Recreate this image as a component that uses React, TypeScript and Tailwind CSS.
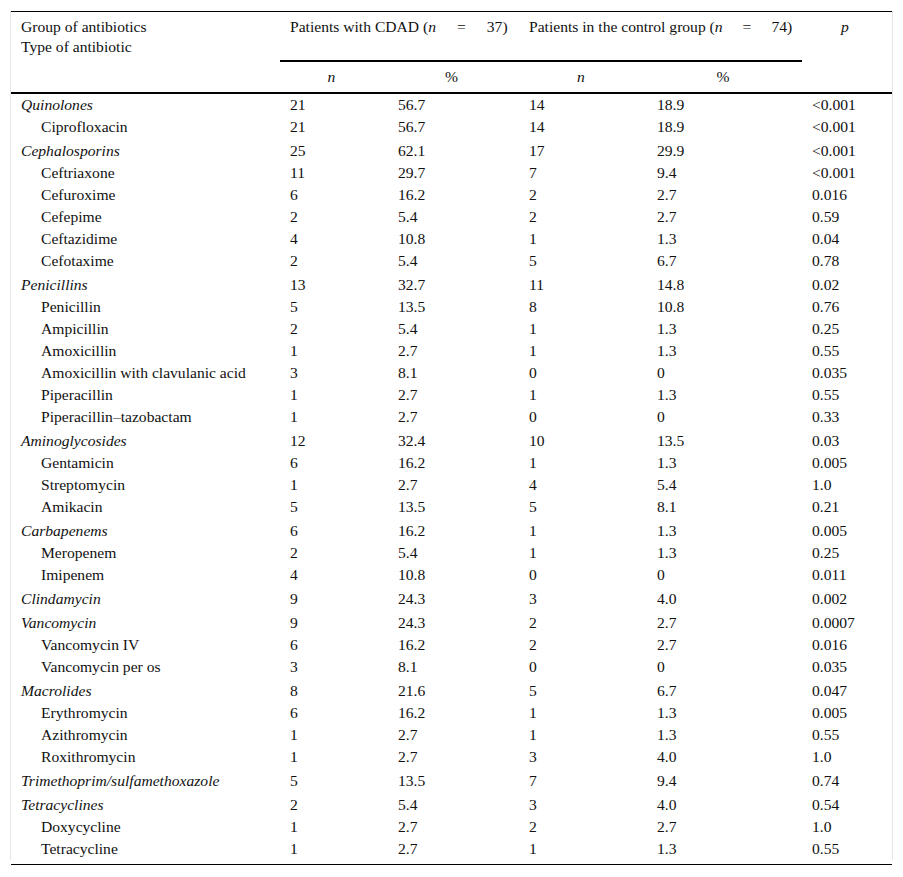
type Row = {
  name: string;
  group?: boolean;
  a: string;
  ap: string;
  b: string;
  bp: string;
  p: string;
};

const rows: Row[] = [
  { name: "Quinolones", group: true, a: "21", ap: "56.7", b: "14", bp: "18.9", p: "<0.001" },
  { name: "Ciprofloxacin", a: "21", ap: "56.7", b: "14", bp: "18.9", p: "<0.001" },
  { name: "Cephalosporins", group: true, a: "25", ap: "62.1", b: "17", bp: "29.9", p: "<0.001" },
  { name: "Ceftriaxone", a: "11", ap: "29.7", b: "7", bp: "9.4", p: "<0.001" },
  { name: "Cefuroxime", a: "6", ap: "16.2", b: "2", bp: "2.7", p: "0.016" },
  { name: "Cefepime", a: "2", ap: "5.4", b: "2", bp: "2.7", p: "0.59" },
  { name: "Ceftazidime", a: "4", ap: "10.8", b: "1", bp: "1.3", p: "0.04" },
  { name: "Cefotaxime", a: "2", ap: "5.4", b: "5", bp: "6.7", p: "0.78" },
  { name: "Penicillins", group: true, a: "13", ap: "32.7", b: "11", bp: "14.8", p: "0.02" },
  { name: "Penicillin", a: "5", ap: "13.5", b: "8", bp: "10.8", p: "0.76" },
  { name: "Ampicillin", a: "2", ap: "5.4", b: "1", bp: "1.3", p: "0.25" },
  { name: "Amoxicillin", a: "1", ap: "2.7", b: "1", bp: "1.3", p: "0.55" },
  { name: "Amoxicillin with clavulanic acid", a: "3", ap: "8.1", b: "0", bp: "0", p: "0.035" },
  { name: "Piperacillin", a: "1", ap: "2.7", b: "1", bp: "1.3", p: "0.55" },
  { name: "Piperacillin–tazobactam", a: "1", ap: "2.7", b: "0", bp: "0", p: "0.33" },
  { name: "Aminoglycosides", group: true, a: "12", ap: "32.4", b: "10", bp: "13.5", p: "0.03" },
  { name: "Gentamicin", a: "6", ap: "16.2", b: "1", bp: "1.3", p: "0.005" },
  { name: "Streptomycin", a: "1", ap: "2.7", b: "4", bp: "5.4", p: "1.0" },
  { name: "Amikacin", a: "5", ap: "13.5", b: "5", bp: "8.1", p: "0.21" },
  { name: "Carbapenems", group: true, a: "6", ap: "16.2", b: "1", bp: "1.3", p: "0.005" },
  { name: "Meropenem", a: "2", ap: "5.4", b: "1", bp: "1.3", p: "0.25" },
  { name: "Imipenem", a: "4", ap: "10.8", b: "0", bp: "0", p: "0.011" },
  { name: "Clindamycin", group: true, a: "9", ap: "24.3", b: "3", bp: "4.0", p: "0.002" },
  { name: "Vancomycin", group: true, a: "9", ap: "24.3", b: "2", bp: "2.7", p: "0.0007" },
  { name: "Vancomycin IV", a: "6", ap: "16.2", b: "2", bp: "2.7", p: "0.016" },
  { name: "Vancomycin per os", a: "3", ap: "8.1", b: "0", bp: "0", p: "0.035" },
  { name: "Macrolides", group: true, a: "8", ap: "21.6", b: "5", bp: "6.7", p: "0.047" },
  { name: "Erythromycin", a: "6", ap: "16.2", b: "1", bp: "1.3", p: "0.005" },
  { name: "Azithromycin", a: "1", ap: "2.7", b: "1", bp: "1.3", p: "0.55" },
  { name: "Roxithromycin", a: "1", ap: "2.7", b: "3", bp: "4.0", p: "1.0" },
  { name: "Trimethoprim/sulfamethoxazole", group: true, a: "5", ap: "13.5", b: "7", bp: "9.4", p: "0.74" },
  { name: "Tetracyclines", group: true, a: "2", ap: "5.4", b: "3", bp: "4.0", p: "0.54" },
  { name: "Doxycycline", a: "1", ap: "2.7", b: "2", bp: "2.7", p: "1.0" },
  { name: "Tetracycline", a: "1", ap: "2.7", b: "1", bp: "1.3", p: "0.55" },
];

export default function App() {
  return (
    <div className="min-h-screen bg-white pt-[11px] text-[15.6px] text-[#111] [font-family:'Liberation_Serif','Times_New_Roman',serif]">
      <div className="ml-[10px] w-[883px] border-x border-[#e6e6e6]">
        <div className="h-px bg-black" />
        <table className="w-[881px] table-fixed border-separate border-spacing-0">
          <colgroup>
            <col className="w-[269px]" />
            <col className="w-[108px]" />
            <col className="w-[131px]" />
            <col className="w-[128px]" />
            <col className="w-[155px]" />
            <col className="w-[90px]" />
          </colgroup>
          <thead>
            <tr>
              <th
                rowSpan={2}
                className="border-b-2 border-black px-[10px] pt-[5px] text-left align-top font-normal leading-[20px]"
              >
                Group of antibiotics
                <br />
                Type of antibiotic
              </th>
              <th
                colSpan={2}
                className="h-[50px] border-b-2 border-black px-[10px] pt-[5px] text-left align-top font-normal leading-[20px] whitespace-nowrap"
              >
                Patients with CDAD (<i>n</i>
                <span className="px-[21px]">=</span>37)
              </th>
              <th
                colSpan={2}
                className="h-[50px] border-b-2 border-black px-[10px] pt-[5px] text-left align-top font-normal leading-[20px] whitespace-nowrap"
              >
                Patients in the control group (<i>n</i>
                <span className="px-[20px]">=</span>74)
              </th>
              <th
                rowSpan={2}
                className="border-b-2 border-black pr-[4px] pt-[5px] text-center align-top font-normal italic leading-[20px]"
              >
                p
              </th>
            </tr>
            <tr>
              <th className="h-[32px] border-b-2 border-black pr-[5px] text-center align-middle font-normal italic">n</th>
              <th className="h-[32px] border-b-2 border-black pr-[4px] text-center align-middle font-normal">%</th>
              <th className="h-[32px] border-b-2 border-black pr-[4px] text-center align-middle font-normal italic">n</th>
              <th className="h-[32px] border-b-2 border-black pr-[3px] text-center align-middle font-normal">%</th>
            </tr>
          </thead>
          <tbody>
            {rows.map((r, i) => {
              const pad = r.group && i > 0 ? "pt-[2px]" : "";
              return (
                <tr key={r.name} className="leading-[22px]">
                  <td
                    className={`${pad} whitespace-nowrap ${
                      r.group ? "pl-[10px] italic" : "pl-[30px]"
                    }`}
                  >
                    {r.name}
                  </td>
                  <td className={`${pad} pl-[10px]`}>{r.a}</td>
                  <td className={`${pad} pl-[10px]`}>{r.ap}</td>
                  <td className={`${pad} pl-[10px]`}>{r.b}</td>
                  <td className={`${pad} pl-[10px]`}>{r.bp}</td>
                  <td className={`${pad} pl-[10px]`}>{r.p}</td>
                </tr>
              );
            })}
          </tbody>
        </table>
      </div>
      <div className="ml-[11px] mt-[4px] h-px w-[881px] bg-black" />
    </div>
  );
}
